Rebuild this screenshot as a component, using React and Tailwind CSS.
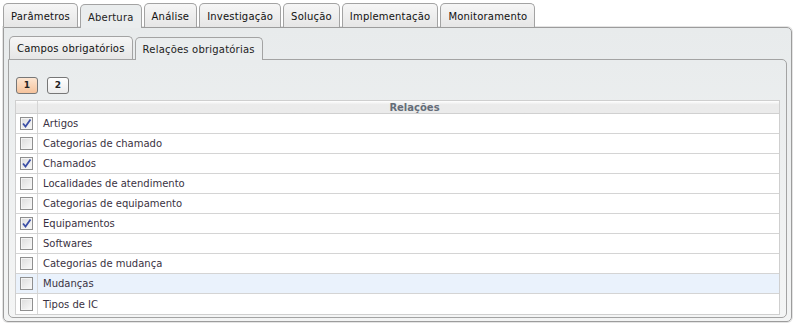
const outerTabs = ['Parâmetros', 'Abertura', 'Análise', 'Investigação', 'Solução', 'Implementação', 'Monitoramento'];

const rows = [
  { label: 'Artigos', checked: true },
  { label: 'Categorias de chamado' },
  { label: 'Chamados', checked: true },
  { label: 'Localidades de atendimento' },
  { label: 'Categorias de equipamento' },
  { label: 'Equipamentos', checked: true },
  { label: 'Softwares' },
  { label: 'Categorias de mudança' },
  { label: 'Mudanças', hover: true },
  { label: 'Tipos de IC' }
];

function Checkbox({ checked }) {
  return (
    <span className="flex h-[13px] w-[13px] items-center justify-center border border-[#8f8f8f] bg-gradient-to-br from-[#dcdcdc] to-[#fafafa] shadow-[inset_0_0_0_1px_#f4f4f4]">
      {checked && (
        <svg width="11" height="11" viewBox="0 0 11 11">
          <path d="M2 5.5 L4.5 8.5 L9.5 1.5" fill="none" stroke="#3c4fa6" strokeWidth="1.8" />
        </svg>
      )}
    </span>
  );
}

function Tab({ label, active, inner }) {
  return (
    <div
      className={
        'flex items-center rounded-t-[5px] border border-b-0 border-[#a3a3a3] px-[7px] pt-[1px] text-[10px] tracking-[0.2px] ' +
        (inner ? 'h-[23px] ' : 'h-[24px] ') +
        (active
          ? 'relative z-10 -mb-px bg-[#eaedee] text-[#222]'
          : 'bg-gradient-to-b from-[#f6f6f6] to-[#e6e6e6] text-[#111]')
      }
    >
      {label}
    </div>
  );
}

function App() {
  return (
    <div
      className="h-[327px] w-[794px] bg-white pl-[3px] pt-[3px]"
      style={{ fontFamily: '"DejaVu Sans", Verdana, sans-serif' }}
    >
      <div className="flex items-end gap-[2px]">
        {outerTabs.map((t) => (
          <Tab key={t} label={t} active={t === 'Abertura'} />
        ))}
      </div>

      <div className="h-[295px] w-[789px] rounded-tr-[5px] rounded-b-[5px] border border-[#9c9c9c] bg-gradient-to-b from-[#e8ebec] to-[#f3f4f4] pl-[4px] pr-[4px] pt-[8px] shadow-[0_0_0_1px_#e4e4e4]">
        <div className="flex items-end gap-[2px] pl-[1px]">
          <Tab inner label="Campos obrigatórios" />
          <Tab inner active label="Relações obrigatórias" />
        </div>

        <div className="h-[259px] w-[779px] rounded-tr-[5px] rounded-b-[5px] border border-[#a3a3a3] bg-gradient-to-b from-[#e9eced] to-[#f4f5f5] pl-[6px] pt-[17px]">
          <div className="mb-[6px] flex gap-[9px] pl-[1px]">
            <span className="flex h-[17px] w-[22px] items-center justify-center rounded-[3px] border border-[#777] bg-gradient-to-b from-[#fde6d2] to-[#f5c39c] text-[9px] font-bold text-[#222]">
              1
            </span>
            <span className="flex h-[17px] w-[22px] items-center justify-center rounded-[3px] border border-[#777] bg-gradient-to-b from-white to-[#ececec] text-[9px] font-bold text-[#222]">
              2
            </span>
          </div>

          <div className="w-[765px] border border-[#cfcfcf] bg-white">
            <div className="flex h-[13px] border-b border-[#d0d0d0] bg-gradient-to-b from-white to-[#ebebeb] to-30%">
              <div className="w-[22px] border-r border-[#d6d6d6]" />
              <div className="flex-1 pl-[12px] text-center text-[10px] font-bold leading-[13px] text-[#646c78]">Relações</div>
            </div>
            {rows.map((r, i) => (
              <div
                key={r.label}
                className={
                  'flex h-[20px] ' +
                  (i < rows.length - 1 ? 'border-b border-[#d4d4d4] ' : '') +
                  (r.hover ? 'bg-[#eaf2fc]' : 'bg-white')
                }
              >
                <div className="flex w-[22px] items-center justify-center border-r border-[#d6d6d6]">
                  <Checkbox checked={r.checked} />
                </div>
                <div className="flex flex-1 items-center pl-[5px] text-[10px] text-[#3a3242]">{r.label}</div>
              </div>
            ))}
          </div>
        </div>
      </div>
    </div>
  );
}

export default App;
